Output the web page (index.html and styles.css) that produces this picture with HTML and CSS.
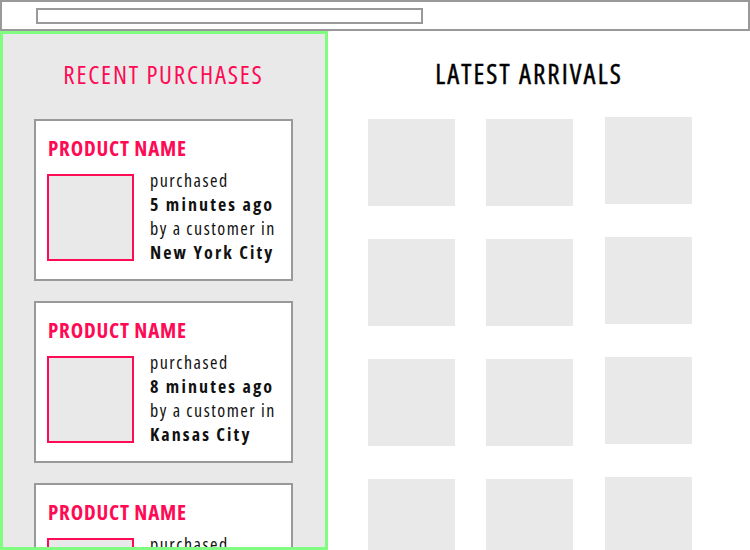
FILE: index.html
```html
<!DOCTYPE html>
<html lang="en">
<head>
  <meta charset="UTF-8" />
  <meta name="viewport" content="width=device-width, initial-scale=1.0"/>
  <title>Store</title>
  <link rel="stylesheet" href="styles.css">
</head>
<body>

  <!-- Top bar -->
  <div class="topbar">
    <div class="search-box"></div>
  </div>

  <div class="page">

    <!-- Recent purchases -->
    <div class="sidebar">
      <h2 class="recent-title">RECENT PURCHASES</h2>
      <div id="purchases"></div>
    </div>

    <!-- Latest arrivals -->
    <div class="arrivals">
      <h2 class="arrivals-title">LATEST ARRIVALS</h2>
      <div class="grid" id="grid"></div>
    </div>

  </div>

  <script>
    const purchases = [
      { when: "5 minutes ago", city: "New York City" },
      { when: "8 minutes ago", city: "Kansas City" },
      { when: "12 minutes ago", city: "Chicago" }
    ];

    const list = document.getElementById('purchases');
    purchases.forEach(p => {
      const div = document.createElement('div');
      div.className = 'purchase';
      div.innerHTML = `
        <p class="product-name">PRODUCT NAME</p>
        <div class="purchase-body">
          <div class="thumb"></div>
          <div class="purchase-info">
            <p>purchased</p>
            <p><strong>${p.when}</strong></p>
            <p>by a customer in</p>
            <p><strong>${p.city}</strong></p>
          </div>
        </div>
      `;
      list.appendChild(div);
    });

    const grid = document.getElementById('grid');
    for (let i = 0; i < 12; i++) {
      const tile = document.createElement('div');
      tile.className = 'tile';
      grid.appendChild(tile);
    }
  </script>

</body>
</html>
```

FILE: styles.css
```css
body {
  margin: 0;
  font-family: "Open Sans", sans-serif;
  font-stretch: 75%;
  color: #111;
  background: #fff;
  height: 550px;
  overflow: hidden;
}

.topbar {
  height: 31px;
  box-sizing: border-box;
  border: 2px solid #999;
  padding: 6px 0 0 34px;
}

.search-box {
  width: 387px;
  height: 16px;
  border: 2px solid #999;
  box-sizing: border-box;
}

.page {
  display: flex;
}

.sidebar {
  width: 328px;
  height: 519px;
  box-sizing: border-box;
  border: 3px solid #80fc80;
  background-color: #e9e9e9;
  padding: 0 32px 0 31px;
  overflow: hidden;
}

.recent-title {
  margin: 25px 0 30px;
  font-size: 25px;
  font-weight: normal;
  letter-spacing: 1.8px;
  line-height: 30px;
  text-align: center;
  color: #ff0a54;
}

.purchase {
  background: #fff;
  border: 2px solid #999;
  height: 162px;
  box-sizing: border-box;
  margin-bottom: 20px;
  padding: 15px 11px;
}

.product-name {
  margin: 0 0 14px;
  padding-left: 1px;
  color: #ff0a54;
  font-size: 21px;
  font-weight: bold;
  letter-spacing: 0.8px;
  line-height: 24px;
}

.purchase-body {
  display: flex;
  align-items: flex-start;
  gap: 16px;
}

.thumb {
  width: 87px;
  height: 87px;
  box-sizing: border-box;
  border: 2px solid #ff0a54;
  background: #e9e9e9;
  flex-shrink: 0;
}

.purchase-info {
  margin-top: -6px;
  white-space: nowrap;
}

.purchase-info p {
  margin: 0;
  font-size: 18px;
  letter-spacing: 1.5px;
  line-height: 24px;
}

.purchase-info strong {
  letter-spacing: 2.1px;
}

.arrivals {
  flex: 1;
}

.arrivals-title {
  margin: 28px 0 30px;
  padding-right: 20px;
  font-size: 27px;
  font-weight: normal;
  letter-spacing: 2.1px;
  line-height: 30px;
  text-align: center;
  color: #000;
  -webkit-text-stroke: 0.4px #000;
}

.grid {
  display: grid;
  grid-template-columns: repeat(3, 87px);
  column-gap: 31px;
  row-gap: 33px;
  padding-left: 40px;
}

.tile {
  width: 87px;
  height: 87px;
  background: #e9e9e9;
}

.tile:nth-child(3n) {
  margin: -2px 0 0 1px;
}
```
